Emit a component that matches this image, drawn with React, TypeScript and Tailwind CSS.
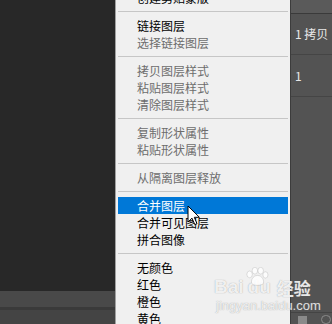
import React from "react";

type Item = { t: string; kind?: "on" | "off" | "hl" } | "sep";

const items: Item[] = [
  { t: "创建剪贴蒙版", kind: "on" },
  "sep",
  { t: "链接图层", kind: "on" },
  { t: "选择链接图层", kind: "off" },
  "sep",
  { t: "拷贝图层样式", kind: "off" },
  { t: "粘贴图层样式", kind: "off" },
  { t: "清除图层样式", kind: "off" },
  "sep",
  { t: "复制形状属性", kind: "off" },
  { t: "粘贴形状属性", kind: "off" },
  "sep",
  { t: "从隔离图层释放", kind: "off" },
  "sep",
  { t: "合并图层", kind: "hl" },
  { t: "合并可见图层", kind: "on" },
  { t: "拼合图像", kind: "on" },
  "sep",
  { t: "无颜色", kind: "on" },
  { t: "红色", kind: "on" },
  { t: "橙色", kind: "on" },
  { t: "黄色", kind: "on" },
];

export default function App() {
  return (
    <div className="relative flex w-[332px] h-[324px] overflow-hidden font-['Noto_Sans_CJK_SC','Microsoft_YaHei',sans-serif] bg-[#282828]">
      {/* left dark workspace */}
      <div className="flex flex-col w-[115px] shrink-0">
        <div className="flex-1 bg-[#282828]" />
        <div className="h-[16px] bg-[#494949]" />
        <div className="h-[3px] bg-[#3a3a3a]" />
        <div className="h-[14px] bg-[#444444]" />
      </div>

      {/* context menu */}
      <div className="w-[175px] shrink-0 border-l border-[#a0a0a0] bg-[#f0f0f0] px-[2px] overflow-hidden">
        <div className="-mt-[11px] flex flex-col">
          {items.map((it, i) =>
            it === "sep" ? (
              <div key={i} className="h-[11px] flex flex-col">
                <div className="mt-[5px] h-px bg-[#c6c6c6]" />
              </div>
            ) : (
              <div
                key={i}
                className={
                  it.kind === "hl"
                    ? "h-[17px] flex items-center pl-[19px] text-[12px] leading-none bg-[#0078d7] text-white"
                    : it.kind === "off"
                    ? "h-[17px] flex items-center pl-[19px] text-[12px] leading-none text-[#6d6d6d]"
                    : "h-[17px] flex items-center pl-[19px] text-[12px] leading-none text-black"
                }
              >
                {it.t}
              </div>
            )
          )}
        </div>
      </div>

      {/* right layers panel */}
      <div className="flex flex-col w-[42px] shrink-0 bg-[#535353] border-l border-[#3c3c3c]">
        <div className="h-[13px] bg-[#5a5a5a]" />
        <div className="h-px bg-[#3a3a3a]" />
        <div className="h-[40px] flex items-center pl-[4px] text-[12px] leading-none text-[#e8e8e8] whitespace-nowrap">
          1 拷贝
        </div>
        <div className="h-px bg-[#454545]" />
        <div className="h-[41px] flex items-center pl-[4px] text-[12px] leading-none text-[#e8e8e8]">
          1
        </div>
        <div className="h-px bg-[#454545]" />
        <div className="flex-1" />
        <div className="h-[12px] border-t border-[#444444] flex items-end gap-[14px] pl-[7px]">
          <div className="w-[9px] h-[8px] bg-[#8a8a8a]" />
          <div className="w-[10px] h-[9px] rounded-full border border-[#8a8a8a]" />
        </div>
      </div>

      {/* mouse cursor */}
      <svg
        className="absolute left-[187px] top-[205px]"
        width="14"
        height="22"
        viewBox="0 0 14 22"
      >
        <path
          d="M1 1 L1 17 L5 13.2 L7.8 19.6 L10 18.7 L7.3 12.3 L12.4 12.3 Z"
          fill="#ffffff"
          stroke="#000000"
          strokeWidth="1"
          strokeLinejoin="round"
        />
      </svg>

      {/* Baidu jingyan watermark */}
      <div className="absolute left-[214px] top-[267px] flex flex-col items-start pointer-events-none select-none">
        <svg
          className="absolute left-[30px] top-[0px]"
          width="26"
          height="19"
          viewBox="0 0 24 18"
        >
          <g fill="rgba(255,255,255,0.8)" stroke="rgba(140,140,140,0.4)" strokeWidth="0.6">
            <ellipse cx="5" cy="7" rx="2.6" ry="3.2" />
            <ellipse cx="10" cy="3.5" rx="2.6" ry="3.2" />
            <ellipse cx="15.5" cy="3.5" rx="2.6" ry="3.2" />
            <ellipse cx="20" cy="7.5" rx="2.4" ry="3" />
            <path d="M12.5 8 C8 8 6 13 7 15.5 C8.5 18 16.5 18 18 15.5 C19 13 17 8 12.5 8 Z" />
          </g>
        </svg>
        <div className="mt-[10px] flex items-end gap-[4px] text-[19px] leading-none font-bold text-white/85 [text-shadow:0_0_1px_rgba(110,110,110,0.7)] font-['Liberation_Sans',sans-serif]">
          <span>Bai</span>
          <span>du</span>
          <span className="ml-[2px] text-[17px] font-['Noto_Sans_CJK_SC',sans-serif]">经验</span>
        </div>
        <div className="mt-[3px] ml-[2px] text-[13px] leading-none text-white/80 [text-shadow:0_0_1px_rgba(110,110,110,0.7)] font-['Liberation_Sans',sans-serif]">
          jingyan.baidu.com
        </div>
      </div>
    </div>
  );
}
